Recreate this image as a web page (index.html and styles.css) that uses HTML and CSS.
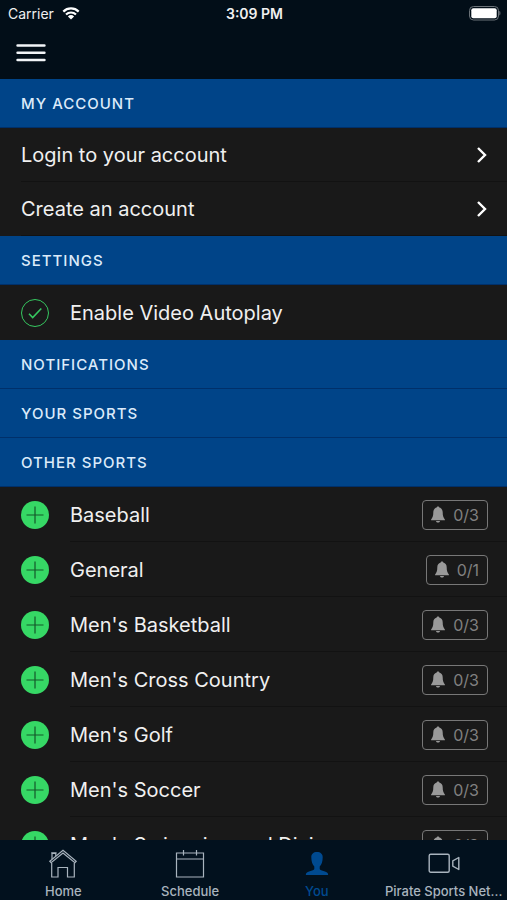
FILE: index.html
```html
<!DOCTYPE html>
<html lang="en">
<head>
<meta charset="UTF-8">
<meta name="viewport" content="width=device-width, initial-scale=1.0">
<title>Pirate Sports - You</title>
<link rel="stylesheet" href="styles.css">
</head>
<body>
<!-- Shared icons -->
<svg class="sprite" aria-hidden="true">
    <symbol id="chevron" viewBox="0 0 12 18">
        <path d="M2 2l7 7-7 7" fill="none" stroke="currentColor" stroke-width="2.4"/>
    </symbol>
    <symbol id="plus" viewBox="0 0 28 28">
        <circle cx="14" cy="14" r="14" fill="#36d865"/>
        <path d="M14 5.5v17M5.5 14h17" stroke="#14582a" stroke-width="1.2"/>
    </symbol>
    <symbol id="bell" viewBox="0 0 14 17">
        <path d="M7 0.4c-.8 0-1.3.5-1.3 1.2C3.5 2.2 2.3 4 2.3 6.3c0 3.8-.7 5.4-2.2 7.2v.8h13.8v-.8c-1.5-1.8-2.2-3.4-2.2-7.2 0-2.3-1.2-4.1-3.4-4.7 0-.7-.5-1.2-1.3-1.2zM5 15c.2 1 1 1.6 2 1.6s1.8-.6 2-1.6z" fill="currentColor"/>
    </symbol>
</svg>

<header class="header">
    <div class="status-bar">
        <div class="carrier">
            <span>Carrier</span>
            <svg width="18" height="13" viewBox="0 0 18 13">
                <path d="M1.3 4.6a11 11 0 0 1 15.4 0M4 7.5a7.2 7.2 0 0 1 10 0" fill="none" stroke="#fff" stroke-width="2.2"/>
                <path d="M5.9 9.4a4.5 4.5 0 0 1 6.2 0L9 12.6z" fill="#fff"/>
            </svg>
        </div>
        <span class="time">3:09 PM</span>
        <svg class="battery" width="32" height="15" viewBox="0 0 32 15">
            <rect x="0.5" y="0.5" width="29" height="13.5" rx="4" fill="none" stroke="#6b7278"/>
            <rect x="2.3" y="2.3" width="25.4" height="9.9" rx="2" fill="#fff"/>
            <path d="M30.6 5.2q1.4 2 0 4z" fill="#6b7278" stroke="#6b7278" stroke-width="0.5"/>
        </svg>
    </div>
    <button class="menu-button" aria-label="Menu">
        <svg width="30" height="19" viewBox="0 0 30 19">
            <path d="M1.6 2.500h26.800M1.600 9.700h26.800M1.600 17h26.800" stroke="#f2f5f8" stroke-width="2.6" stroke-linecap="round"/>
        </svg>
    </button>
</header>

<main class="content">
    <h2 class="section-title">MY ACCOUNT</h2>
    <ul class="list">
        <li><a class="row account" href="#login"><span class="name">Login to your account</span><svg class="chevron"><use href="#chevron"/></svg></a></li>
        <li><a class="row account" href="#create"><span class="name">Create an account</span><svg class="chevron"><use href="#chevron"/></svg></a></li>
    </ul>

    <h2 class="section-title">SETTINGS</h2>
    <div class="row">
        <span class="check">
            <input type="checkbox" id="autoplay" checked>
            <svg viewBox="0 0 28 28">
                <path d="M8 14.8l3.7 3.7L20.3 9.5" fill="none" stroke="#36c860" stroke-width="1.6"/>
            </svg>
        </span>
        <label class="name" for="autoplay">Enable Video Autoplay</label>
    </div>

    <h2 class="section-title">NOTIFICATIONS</h2>
    <h2 class="section-title">YOUR SPORTS</h2>
    <h2 class="section-title">OTHER SPORTS</h2>
    <ul class="list">
        <li class="row sport">
            <button class="add" aria-label="Add Baseball"><svg><use href="#plus"/></svg></button>
            <span class="name">Baseball</span>
            <button class="alerts"><svg><use href="#bell"/></svg>0/3</button>
        </li>
        <li class="row sport">
            <button class="add" aria-label="Add General"><svg><use href="#plus"/></svg></button>
            <span class="name">General</span>
            <button class="alerts"><svg><use href="#bell"/></svg>0/1</button>
        </li>
        <li class="row sport">
            <button class="add" aria-label="Add Men's Basketball"><svg><use href="#plus"/></svg></button>
            <span class="name">Men's Basketball</span>
            <button class="alerts"><svg><use href="#bell"/></svg>0/3</button>
        </li>
        <li class="row sport">
            <button class="add" aria-label="Add Men's Cross Country"><svg><use href="#plus"/></svg></button>
            <span class="name">Men's Cross Country</span>
            <button class="alerts"><svg><use href="#bell"/></svg>0/3</button>
        </li>
        <li class="row sport">
            <button class="add" aria-label="Add Men's Golf"><svg><use href="#plus"/></svg></button>
            <span class="name">Men's Golf</span>
            <button class="alerts"><svg><use href="#bell"/></svg>0/3</button>
        </li>
        <li class="row sport">
            <button class="add" aria-label="Add Men's Soccer"><svg><use href="#plus"/></svg></button>
            <span class="name">Men's Soccer</span>
            <button class="alerts"><svg><use href="#bell"/></svg>0/3</button>
        </li>
        <li class="row sport">
            <button class="add" aria-label="Add Men's Swimming and Diving"><svg><use href="#plus"/></svg></button>
            <span class="name">Men's Swimming and Diving</span>
            <button class="alerts"><svg><use href="#bell"/></svg>0/3</button>
        </li>
    </ul>
</main>

<nav class="tabs">
    <a class="tab" href="#home">
        <svg width="32" height="30" viewBox="0 0 32 30" fill="none" stroke="currentColor" stroke-width="1.2">
            <path d="M2.8 12.2L16 1.2l13.2 11-1.3 1.5L16 4 4.1 13.7z"/>
            <path d="M5 10V4.5h3.8v2.5M4.2 3.8h5.4M4.700 14v14h6.300V18.500h9.500V28h6.800V14"/>
        </svg>
        <span>Home</span>
    </a>
    <a class="tab" href="#schedule">
        <svg width="32" height="30" viewBox="0 0 32 30" fill="none" stroke="currentColor" stroke-width="1.2">
            <path d="M2.5 4h27v24h-27zM2.5 10h27M9.5 1v5.5M22.5 1v5.5"/>
        </svg>
        <span>Schedule</span>
    </a>
    <a class="tab active" href="#you">
        <svg width="32" height="30" viewBox="0 0 32 30">
            <path d="M16 3c-3.600 0-5.700 2-5.700 5.200 0 4 1 7.400 3 9.300v2.200c0 1.200-1.300 1.600-3.800 2.200C6.300 22.700 4.800 23.500 4.800 26h22.400c0-2.500-1.500-3.300-4.700-4.100-2.500-.6-3.800-1-3.800-2.200v-2.200c2-1.900 3-5.300 3-9.300C21.700 5 19.600 3 16 3z" fill="currentColor"/>
        </svg>
        <span>You</span>
    </a>
    <a class="tab" href="#network">
        <svg width="32" height="30" viewBox="0 0 32 30" fill="none" stroke="currentColor" stroke-width="1.4" stroke-linejoin="round">
            <rect x="1.2" y="5.2" width="20" height="18" rx="1.5"/>
            <path d="M30.8 8.5v12l-6-3.300v-5.400z"/>
        </svg>
        <span>Pirate Sports Net...</span>
    </a>
</nav>
</body>
</html>
```
FILE: styles.css
```css
* {
    box-sizing: border-box;
}
body {
    display: flex;
    flex-direction: column;
    height: 100vh;
    margin: 0;
    font-family: Inter, "Liberation Sans", sans-serif;
    color: #f0f0f0;
    background-color: #191919;
}
button {
    padding: 0;
    font: inherit;
    color: inherit;
    background: none;
    border: none;
    cursor: pointer;
}
a {
    color: inherit;
    text-decoration: none;
}
svg {
    display: block;
}
.sprite {
    display: none;
}

/* Header */
.header {
    flex: none;
    height: 79px;
    background-color: #020e18;
}
.status-bar {
    display: grid;
    grid-template-columns: 1fr auto 1fr;
    align-items: center;
    height: 27px;
    padding: 0 6px 0 8px;
    font-size: 14px;
}
.carrier {
    display: flex;
    align-items: center;
    gap: 8px;
}
.time {
    font-weight: 600;
}
.battery {
    justify-self: end;
}
.menu-button {
    display: block;
    padding: 16px;
}

/* Account, settings and sports lists */
.content {
    flex: 1;
    min-height: 0;
    overflow-y: auto;
    scrollbar-width: none;
}
.section-title {
    height: 49px;
    margin: 0;
    padding-left: 21px;
    font-size: 15px;
    font-weight: 500;
    line-height: 49px;
    letter-spacing: 1px;
    color: #dcebfa;
    background-color: #004488;
    border-bottom: 1px solid #00306a;
}
.list {
    margin: 0;
    padding: 0;
    list-style: none;
}
.row {
    display: flex;
    align-items: center;
    gap: 21px;
    height: 55px;
    padding: 0 19px 0 21px;
    font-size: 20px;
}
/* Hairline under a row, starting where its text starts */
.account {
    height: 54px;
    background: linear-gradient(#121212, #121212) 21px 100% / 100% 1px no-repeat;
}
.sport {
    background: linear-gradient(#121212, #121212) 70px 100% / 100% 1px no-repeat;
}
.name {
    flex: 1;
    white-space: nowrap;
}
.chevron {
    width: 12px;
    height: 18px;
    color: #fff;
}
.check {
    display: grid;
}
.check input,
.check svg {
    grid-area: 1 / 1;
    width: 28px;
    height: 28px;
    margin: 0;
}
.check input {
    appearance: none;
    border: 1px solid #36c860;
    border-radius: 50%;
}
.check svg {
    pointer-events: none;
}
.check input:not(:checked) + svg {
    visibility: hidden;
}
.add svg {
    width: 28px;
    height: 28px;
}
.alerts {
    display: flex;
    align-items: center;
    gap: 8px;
    height: 30px;
    padding: 0 8px;
    font-size: 16px;
    color: #808080;
    border: 1px solid #777;
    border-radius: 4px;
}
.alerts svg {
    width: 14px;
    height: 17px;
    color: #999;
}

/* Bottom navigation */
.tabs {
    display: grid;
    grid-template-columns: repeat(4, 1fr);
    flex: none;
    height: 60px;
    background-color: #02111e;
}
.tab {
    display: flex;
    flex-direction: column;
    align-items: center;
    gap: 5px;
    padding-top: 9px;
    font-size: 13px;
    font-weight: 500;
    line-height: 14px;
    white-space: nowrap;
    color: #a9b4be;
}
.active {
    color: #004a90;
}
```
